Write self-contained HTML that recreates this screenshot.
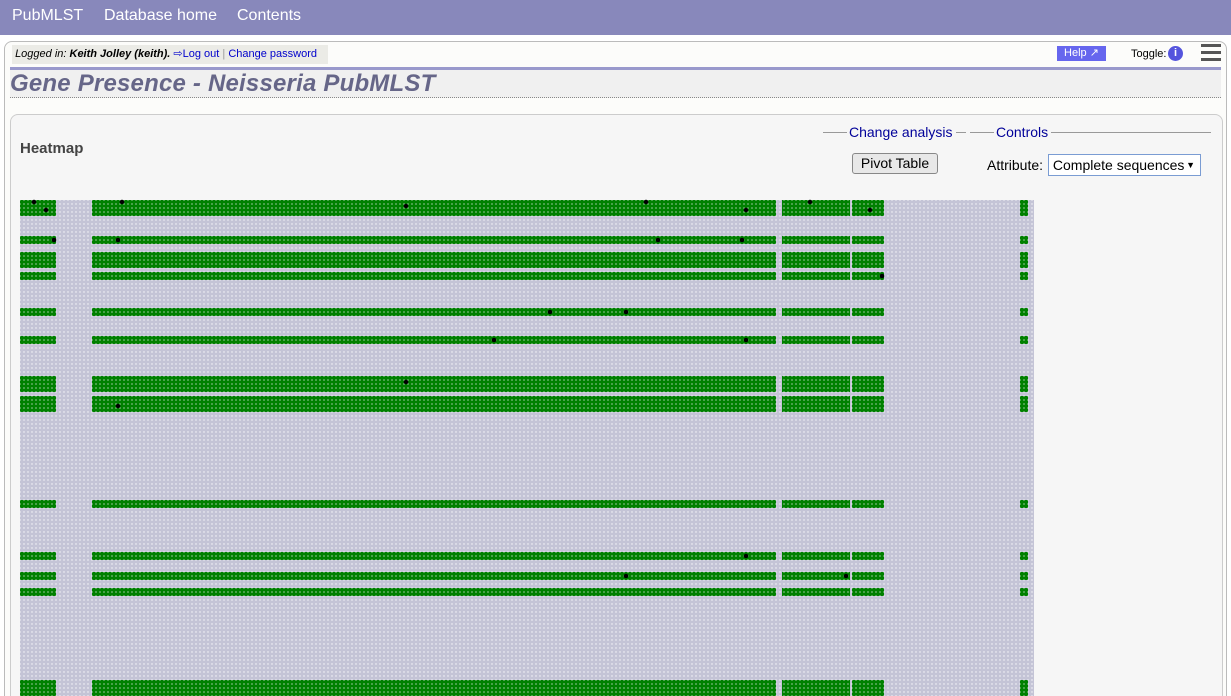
<!DOCTYPE html>
<html><head><meta charset="utf-8"><style>
html,body{margin:0;width:1231px;height:696px;overflow:hidden;}
body{position:relative;background:#fff;font-family:"Liberation Sans",Arial,sans-serif;}
#nav{position:absolute;left:0;top:0;width:1231px;height:35px;background:#8888bb;}
#nav span{position:absolute;top:7px;color:#fff;font-size:16px;}
#main{position:absolute;left:4px;top:41px;width:1221px;height:680px;border:1px solid #bbb;border-radius:8px;background:#fcfcfa;}
#login{position:absolute;left:12px;top:45px;width:316px;height:19px;background:#ebebe6;font-size:11px;line-height:19px;}
#line{position:absolute;left:10px;top:67px;width:1211px;height:3px;background:#9999cc;}
#title{position:absolute;left:10px;top:70px;width:1211px;height:27px;background:#f0f0f0;border-bottom:1px dotted #888;font-size:24px;font-weight:bold;font-style:italic;color:#666688;line-height:27px;letter-spacing:0.2px;}
#panel{position:absolute;left:10px;top:114px;width:1211px;height:600px;border:1px solid #ccc;border-radius:8px;background:#f6f6f6;}
.leg{position:absolute;top:124px;font-size:14px;color:#000099;}
.hr{position:absolute;top:132px;height:1px;background:#999;}
</style></head><body>
<div id="nav"><span style="left:12px">PubMLST</span><span style="left:104px">Database home</span><span style="left:237px">Contents</span></div>
<div id="main"></div>
<div id="login">&nbsp;<i>Logged in: <b>Keith Jolley (keith).</b></i> <span style="color:#0000cc">⇨Log out</span> <span style="color:#999">|</span> <span style="color:#0000cc">Change password</span></div>
<div style="position:absolute;left:1057px;top:46px;width:49px;height:15px;background:#6666ee;color:#fff;font-size:11px;line-height:15px;text-align:center">Help ↗</div>
<div style="position:absolute;left:1131px;top:48px;font-size:11px">Toggle:</div>
<div style="position:absolute;left:1168px;top:46px;width:15px;height:15px;border-radius:50%;background:#5555dd;color:#fff;font-size:11px;font-weight:bold;text-align:center;line-height:15px">i</div>
<div style="position:absolute;left:1201px;top:44px;width:20px;height:3px;background:#555;box-shadow:0 7px 0 #555,0 14px 0 #555"></div>
<div id="line"></div>
<div id="title">Gene Presence - Neisseria PubMLST</div>
<div id="panel"></div>
<div style="position:absolute;left:20px;top:140px;font-size:15px;font-weight:bold;color:#444">Heatmap</div>
<div class="hr" style="left:823px;width:24px"></div><div class="leg" style="left:849px">Change analysis</div><div class="hr" style="left:956px;width:10px"></div>
<div class="hr" style="left:970px;width:24px"></div><div class="leg" style="left:996px">Controls</div><div class="hr" style="left:1051px;width:160px"></div>
<div style="position:absolute;left:852px;top:153px;width:84px;height:19px;border:1px solid #888;border-radius:3px;background:#e8e8e8;font-size:14px;text-align:center;line-height:19px">Pivot Table</div>
<div style="position:absolute;left:987px;top:157px;font-size:14px">Attribute:</div>
<div style="position:absolute;left:1048px;top:154px;width:151px;height:20px;border:1px solid #7a9cd3;background:#fff;font-size:14px;line-height:20px">&nbsp;Complete sequences <span style="position:absolute;right:5px;font-size:9px">▼</span></div>
<svg style="position:absolute;left:0;top:0" width="1231" height="696">
<defs>
<pattern id="b" patternUnits="userSpaceOnUse" x="20" y="200" width="4" height="4"><circle cx="2" cy="2" r="2.25" fill="#c4c4d6"/></pattern>
<pattern id="g" patternUnits="userSpaceOnUse" x="20" y="200" width="4" height="4"><circle cx="2" cy="2" r="2.3" fill="#008000"/></pattern>
</defs>
<rect x="20" y="200" width="1014" height="496" fill="#fff"/>
<rect x="20" y="200" width="1014" height="496" fill="url(#b)"/>
<g fill="url(#g)">
<g id="r2">
<rect x="20" y="200" width="36" height="16"/><rect x="92" y="200" width="684" height="16"/><rect x="782" y="200" width="68" height="16"/><rect x="852" y="200" width="32" height="16"/><rect x="1020" y="200" width="8" height="16"/>
</g>
<use href="#r2" y="52"/><use href="#r2" y="176"/><use href="#r2" y="196"/><use href="#r2" y="480"/>
<g id="r1">
<rect x="20" y="236" width="36" height="8"/><rect x="92" y="236" width="684" height="8"/><rect x="782" y="236" width="68" height="8"/><rect x="852" y="236" width="32" height="8"/><rect x="1020" y="236" width="8" height="8"/>
</g>
<use href="#r1" y="36"/><use href="#r1" y="72"/><use href="#r1" y="100"/><use href="#r1" y="264"/><use href="#r1" y="316"/><use href="#r1" y="336"/><use href="#r1" y="352"/>
</g>
<g fill="#000">
<circle cx="34" cy="202" r="2.3"/><circle cx="46" cy="210" r="2.3"/><circle cx="122" cy="202" r="2.3"/><circle cx="406" cy="206" r="2.3"/><circle cx="646" cy="202" r="2.3"/><circle cx="746" cy="210" r="2.3"/><circle cx="810" cy="202" r="2.3"/><circle cx="870" cy="210" r="2.3"/>
<circle cx="54" cy="240" r="2.3"/><circle cx="118" cy="240" r="2.3"/><circle cx="658" cy="240" r="2.3"/><circle cx="742" cy="240" r="2.3"/>
<circle cx="882" cy="276" r="2.3"/><circle cx="550" cy="312" r="2.3"/><circle cx="626" cy="312" r="2.3"/><circle cx="494" cy="340" r="2.3"/><circle cx="746" cy="340" r="2.3"/>
<circle cx="406" cy="382" r="2.3"/><circle cx="118" cy="406" r="2.3"/><circle cx="746" cy="556" r="2.3"/><circle cx="626" cy="576" r="2.3"/><circle cx="846" cy="576" r="2.3"/>
</g>
</svg>
</body></html>
